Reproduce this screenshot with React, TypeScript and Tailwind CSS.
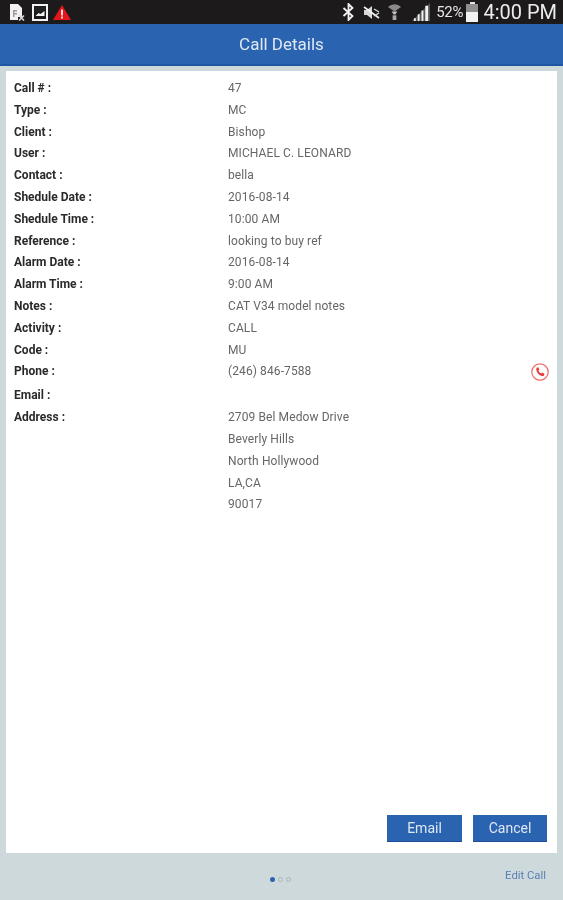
import React from 'react';

const ROWS: { label: string; value?: string }[] = [
  { label: 'Call # :', value: '47' },
  { label: 'Type :', value: 'MC' },
  { label: 'Client :', value: 'Bishop' },
  { label: 'User :', value: 'MICHAEL C. LEONARD' },
  { label: 'Contact :', value: 'bella' },
  { label: 'Shedule Date :', value: '2016-08-14' },
  { label: 'Shedule Time :', value: '10:00 AM' },
  { label: 'Reference :', value: 'looking to buy ref' },
  { label: 'Alarm Date :', value: '2016-08-14' },
  { label: 'Alarm Time :', value: '9:00 AM' },
  { label: 'Notes :', value: 'CAT V34 model notes' },
  { label: 'Activity :', value: 'CALL' },
  { label: 'Code :', value: 'MU' },
];

const ADDRESS = ['2709 Bel Medow Drive', 'Beverly Hills', 'North Hollywood', 'LA,CA', '90017'];

const Row: React.FC<{ label: string; children?: React.ReactNode }> = ({ label, children }) => (
  <div className="flex leading-[21.8px]">
    <div className="w-[214px] shrink-0 font-bold text-[#2a2a2a]">{label}</div>
    <div className="tracking-[0.1px] text-[#666666]">{children}</div>
  </div>
);

const StatusLeft = () => (
  <div className="flex items-center">
    <svg width="17" height="18" viewBox="0 0 17 18" className="mr-[6px]">
      <path d="M1 1h8l4 4v9H9v3H1z" fill="#f2f2f2" />
      <path d="M4 7h4v1.5H5.5V10H8v1.5H5.5V14H4z" fill="#9a9a9a" />
      <path d="M10 12.5l5 5M15 12.5l-5 5" stroke="#d8d8d8" strokeWidth="1.6" />
    </svg>
    <svg width="16" height="17" viewBox="0 0 16 17" className="mr-[5px]">
      <rect x="1" y="1" width="14" height="15" fill="none" stroke="#f2f2f2" strokeWidth="2" />
      <rect x="3" y="3" width="10" height="5" fill="#222222" />
      <path d="M3.5 12l3-3 2 1 4-3v5z" fill="#f2f2f2" />
    </svg>
    <svg width="18" height="15" viewBox="0 0 18 15">
      <path d="M9 0l9 15H0z" fill="#e3161b" />
      <rect x="8" y="4.5" width="2" height="6" fill="#ffd6d6" />
      <rect x="8" y="11.5" width="2" height="2" fill="#ffd6d6" />
    </svg>
  </div>
);

const StatusRight = () => (
  <div className="flex items-center">
    <svg width="13" height="18" viewBox="0 0 12 18" className="mr-[8px]">
      <path d="M1 5l9 8-4 4V1l4 4-9 8" fill="none" stroke="#f2f2f2" strokeWidth="1.8" />
    </svg>
    <svg width="17" height="15" viewBox="0 0 17 15" className="mr-[7px]">
      <path d="M1 5h3l5-4v13l-5-4H1z" fill="#d8d8d8" />
      <path d="M1 2l15 11" stroke="#f2f2f2" strokeWidth="1.6" />
      <path d="M11 4l5 3M11 11l5-3" stroke="#d8d8d8" strokeWidth="1.4" />
    </svg>
    <svg width="15" height="19" viewBox="0 0 16 20" className="mr-[10px]">
      <path d="M1 4a10 10 0 0 1 14 0L8 9z" fill="#8a8a8a" />
      <path d="M5 9h6l-2 3H7z" fill="#c4c4c4" />
      <rect x="6" y="13" width="4" height="5" fill="#a8a8a8" />
    </svg>
    <svg width="19" height="18" viewBox="0 0 20 19" className="mr-[5px]">
      <path d="M0 19L19 0v19z" fill="#555555" />
      <path d="M2 19h2v-3H2zM6 19h2v-7H6zM10 19h2V8h-2zM14 19h3V3h-3z" fill="#f2f2f2" />
    </svg>
    <span className="text-[15px] leading-none text-[#e6e6e6] tracking-[-0.2px]">52%</span>
    <div className="ml-[3px] flex h-[20px] w-[12px] flex-col items-center">
      <div className="h-[2px] w-[5px] bg-[#e6e6e6]" />
      <div className="flex-1 w-full bg-[#8f8f8f]" />
      <div className="h-[10px] w-full bg-[#f2f2f2]" />
    </div>
    <span className="ml-[5px] text-[20px] leading-none text-[#ececec]">4:00 PM</span>
  </div>
);

const PhoneIcon = () => (
  <svg width="18" height="18" viewBox="0 0 18 18" className="mt-[2px]">
    <circle cx="9" cy="9" r="8.2" fill="none" stroke="#f06a66" strokeWidth="1.2" />
    <path d="M5.6 4.8l1.6-.6 1.2 2.4-1 1c.5 1.3 1.5 2.5 2.9 3l1-1 2.2 1.4-.6 1.5c-.4.6-1.2.7-2 .5-3-.8-5-3-5.6-6-.1-1 .1-1.8.3-2.2z" fill="#e53935" />
  </svg>
);

export default function App() {
  return (
    <div className="flex h-[900px] w-[563px] flex-col bg-[#ced9dc] font-['Roboto',sans-serif] blur-[0.5px]">
      <div className="flex h-[24px] shrink-0 items-center justify-between bg-[#1c1a1a] pl-[9px] pr-[6px]">
        <StatusLeft />
        <StatusRight />
      </div>

      <div className="flex h-[42px] shrink-0 items-center justify-center border-b-2 border-[#1f57a4] bg-[#2a63b0] pt-[2px] text-[17px] text-[#dfe8f3]">
        Call Details
      </div>

      <div className="mx-[6px] mt-[5px] flex min-h-0 flex-1 flex-col bg-white pl-[8px] pr-[8px] pt-[7px] text-[12px]">
        {ROWS.map(r => (
          <Row key={r.label} label={r.label}>{r.value}</Row>
        ))}
        <div className="flex h-[24px] leading-[21.8px]">
          <div className="w-[214px] shrink-0 font-bold text-[#2a2a2a]">Phone :</div>
          <div className="tracking-[0.1px] text-[#666666]">(246) 846-7588</div>
          <div className="ml-auto"><PhoneIcon /></div>
        </div>
        <Row label="Email :" />
        <Row label="Address :">
          {ADDRESS.map(line => <div key={line}>{line}</div>)}
        </Row>

        <div className="mt-auto mb-[11px] flex justify-end gap-[11px] pr-[2px]">
          <button className="h-[27px] w-[75px] border-b border-[#1d4f96] bg-[#2a63b0] text-[14px] text-[#dfe8f3]">Email</button>
          <button className="h-[27px] w-[74px] border-b border-[#1d4f96] bg-[#2a63b0] text-[14px] text-[#dfe8f3]">Cancel</button>
        </div>
      </div>

      <div className="relative h-[47px] shrink-0">
        <div className="absolute left-[270px] top-[24px] flex items-center gap-[3px]">
          <div className="h-[5px] w-[5px] rounded-full bg-[#2a63b0]" />
          <div className="h-[5px] w-[5px] rounded-full border border-[#a9b6ba]" />
          <div className="h-[5px] w-[5px] rounded-full border border-[#a9b6ba]" />
        </div>
        <div className="absolute right-[17px] top-[16px] text-[11.3px] leading-[14px] text-[#5b80b3]">Edit Call</div>
      </div>
    </div>
  );
}
